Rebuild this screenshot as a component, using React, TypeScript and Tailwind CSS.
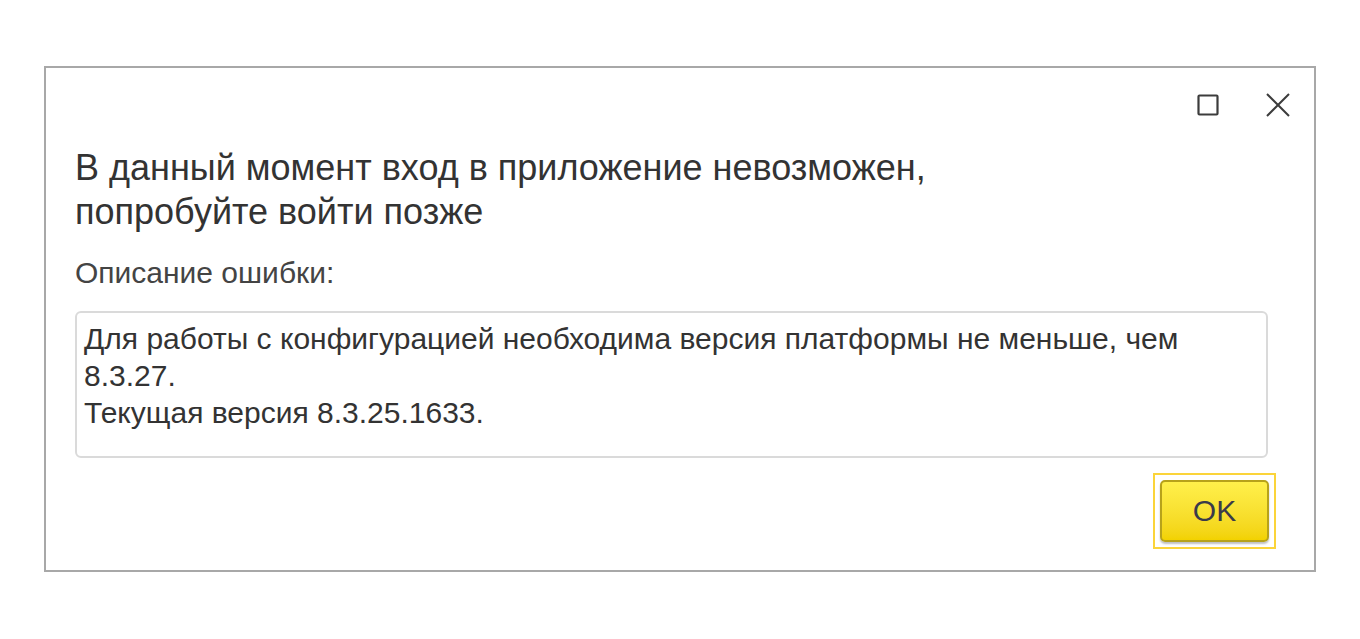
import React from "react";

export default function App() {
  return (
    <div
      className="w-[1360px] h-[639px] bg-white pt-[66px] pl-[44px]"
      style={{ fontFamily: '"Liberation Sans", Arial, sans-serif' }}
    >
      <div className="w-[1272px] h-[506px] border-2 border-[#a8a8a8] bg-white flex flex-col">
        {/* header */}
        <div className="flex justify-end items-center h-[50px] pt-[24px] pr-[23px] gap-[46px]">
          <svg width="22" height="22" viewBox="0 0 22 22" className="text-[#3c3c3c]">
            <rect x="1.5" y="1.5" width="19" height="19" fill="none" stroke="currentColor" strokeWidth="2.2" rx="1" />
          </svg>
          <svg width="26" height="26" viewBox="0 0 26 26" className="text-[#3c3c3c]">
            <path d="M2 2 L24 24 M24 2 L2 24" stroke="currentColor" strokeWidth="2" fill="none" />
          </svg>
        </div>

        <div className="pl-[29px] pr-[45px] flex flex-col">
          <div className="mt-[28px] text-[36px] leading-[44px] text-[#333333]">
            В данный момент вход в приложение невозможен,
            <br />
            попробуйте войти позже
          </div>

          <div className="mt-[22px] text-[30px] leading-[34px] text-[#444444]">Описание ошибки:</div>

          <div className="mt-[21px] w-[1193px] h-[147px] border-2 border-[#dadada] rounded-[6px] pl-[7px] pt-[7px] text-[30px] leading-[37px] text-[#333333]">
            Для работы с конфигурацией необходима версия платформы не меньше, чем
            <br />
            8.3.27.
            <br />
            Текущая версия 8.3.25.1633.
          </div>
        </div>

        <div className="flex justify-end mt-[15px] pr-[38px]">
          <div className="border-2 border-[#fbd43a] p-[5px]">
            <button className="w-[109px] h-[62px] rounded-[5px] border-2 border-[#b7a21a] bg-gradient-to-b from-[#fff04a] to-[#f2d200] shadow-[0_2px_2px_rgba(0,0,0,0.25)] text-[30px] text-[#3a3a4a] flex items-center justify-center pb-[1px]">
              OK
            </button>
          </div>
        </div>
      </div>
    </div>
  );
}
